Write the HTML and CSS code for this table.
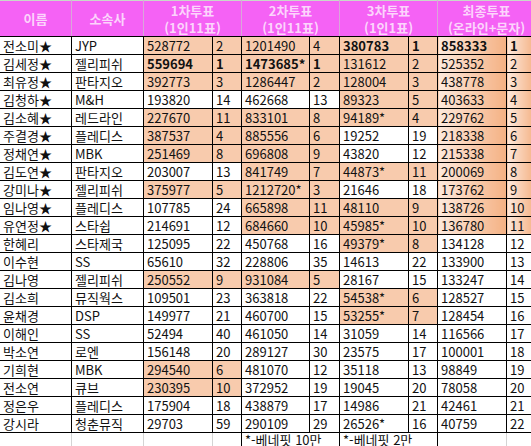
FILE: index.html
```html
<!DOCTYPE html>
<html lang="ko">
<head>
<meta charset="utf-8">
<link rel="stylesheet" href="styles.css">
</head>
<body>
<table class="sheet">
  <colgroup>
    <col class="c-name"><col class="c-agency">
    <col class="c-vote"><col class="c-rank">
    <col class="c-vote2"><col class="c-rank2">
    <col class="c-vote"><col class="c-rank">
    <col class="c-vote"><col class="c-rank">
  </colgroup>
  <thead>
    <tr>
      <th>이름</th>
      <th>소속사</th>
      <th colspan="2"><span class="hl">1차투표</span><span class="hl">(1인11표)</span></th>
      <th colspan="2"><span class="hl">2차투표</span><span class="hl">(1인11표)</span></th>
      <th colspan="2"><span class="hl">3차투표</span><span class="hl">(1인1표)</span></th>
      <th colspan="2"><span class="hl">최종투표</span><span class="hl">(온라인+문자)</span></th>
    </tr>
  </thead>
  <tbody>
    <tr><td>전소미★</td><td>JYP</td><td class="o">528772</td><td class="o">2</td><td class="o">1201490</td><td class="o">4</td><td class="o b">380783</td><td class="o b">1</td><td class="g b">858333</td><td class="g b">1</td></tr>
    <tr><td>김세정★</td><td>젤리피쉬</td><td class="o b">559694</td><td class="o b">1</td><td class="o b">1473685*</td><td class="o b">1</td><td class="o">131612</td><td class="o">2</td><td class="g">525352</td><td class="g">2</td></tr>
    <tr><td>최유정★</td><td>판타지오</td><td class="o">392773</td><td class="o">3</td><td class="o">1286447</td><td class="o">2</td><td class="o">128004</td><td class="o">3</td><td class="g">438778</td><td class="g">3</td></tr>
    <tr><td>김청하★</td><td>M&amp;H</td><td>193820</td><td>14</td><td>462668</td><td>13</td><td class="o">89323</td><td class="o">5</td><td class="g">403633</td><td class="g">4</td></tr>
    <tr><td>김소혜★</td><td>레드라인</td><td class="o">227670</td><td class="o">11</td><td class="o">833101</td><td class="o">8</td><td class="o">94189*</td><td class="o">4</td><td class="g">229762</td><td class="g">5</td></tr>
    <tr><td>주결경★</td><td>플레디스</td><td class="o">387537</td><td class="o">4</td><td class="o">885556</td><td class="o">6</td><td>19252</td><td>19</td><td class="g">218338</td><td class="g">6</td></tr>
    <tr><td>정채연★</td><td>MBK</td><td class="o">251469</td><td class="o">8</td><td class="o">696808</td><td class="o">9</td><td>43820</td><td>12</td><td class="g">215338</td><td class="g">7</td></tr>
    <tr><td>김도연★</td><td>판타지오</td><td>203007</td><td>13</td><td class="o">841749</td><td class="o">7</td><td class="o">44873*</td><td class="o">11</td><td class="g">200069</td><td class="g">8</td></tr>
    <tr><td>강미나★</td><td>젤리피쉬</td><td class="o">375977</td><td class="o">5</td><td class="o">1212720*</td><td class="o">3</td><td>21646</td><td>18</td><td class="g">173762</td><td class="g">9</td></tr>
    <tr><td>임나영★</td><td>플레디스</td><td>107785</td><td>24</td><td class="o">665898</td><td class="o">11</td><td class="o">48110</td><td class="o">9</td><td class="g">138726</td><td class="g">10</td></tr>
    <tr><td>유연정★</td><td>스타쉽</td><td>214691</td><td>12</td><td class="o">684660</td><td class="o">10</td><td class="o">45985*</td><td class="o">10</td><td class="g">136780</td><td class="g">11</td></tr>
    <tr><td>한혜리</td><td>스타제국</td><td>125095</td><td>22</td><td>450768</td><td>16</td><td class="o">49379*</td><td class="o">8</td><td>134128</td><td>12</td></tr>
    <tr><td>이수현</td><td>SS</td><td>65610</td><td>32</td><td>228806</td><td>35</td><td>14613</td><td>22</td><td>133900</td><td>13</td></tr>
    <tr><td>김나영</td><td>젤리피쉬</td><td class="o">250552</td><td class="o">9</td><td class="o">931084</td><td class="o">5</td><td>28167</td><td>15</td><td>133247</td><td>14</td></tr>
    <tr><td>김소희</td><td>뮤직웍스</td><td>109501</td><td>23</td><td>363818</td><td>22</td><td class="o">54538*</td><td class="o">6</td><td>128527</td><td>15</td></tr>
    <tr><td>윤채경</td><td>DSP</td><td>149977</td><td>21</td><td>460700</td><td>15</td><td class="o">53255*</td><td class="o">7</td><td>128454</td><td>16</td></tr>
    <tr><td>이해인</td><td>SS</td><td>52494</td><td>40</td><td>461050</td><td>14</td><td>31059</td><td>14</td><td>116566</td><td>17</td></tr>
    <tr><td>박소연</td><td>로엔</td><td>156148</td><td>20</td><td>289127</td><td>30</td><td>23575</td><td>17</td><td>100001</td><td>18</td></tr>
    <tr><td>기희현</td><td>MBK</td><td class="o">294540</td><td class="o">6</td><td>481070</td><td>12</td><td>35118</td><td>13</td><td>98849</td><td>19</td></tr>
    <tr><td>전소연</td><td>큐브</td><td class="o">230395</td><td class="o">10</td><td>372952</td><td>19</td><td>19045</td><td>20</td><td>78058</td><td>20</td></tr>
    <tr><td>정은우</td><td>플레디스</td><td>175904</td><td>18</td><td>438879</td><td>17</td><td>14986</td><td>21</td><td>42461</td><td>21</td></tr>
    <tr><td>강시라</td><td>청춘뮤직</td><td>29703</td><td>59</td><td>290109</td><td>29</td><td>26526*</td><td>16</td><td>40759</td><td>22</td></tr>
    <tr class="foot">
      <td></td><td></td><td></td><td></td>
      <td colspan="2" class="note">*-베네핏 10만</td>
      <td colspan="2" class="note">*-베네핏 2만</td>
      <td class="note"></td><td></td>
    </tr>
  </tbody>
</table>
</body>
</html>
```

FILE: styles.css
```css
html, body {
  margin: 0;
  padding: 0;
  background: #ffffff;
  overflow: hidden;
}

.sheet {
  border-collapse: collapse;
  table-layout: fixed;
  width: 536px;
  margin-left: -1px;
  font-family: "Noto Sans CJK KR", "Noto Sans", sans-serif;
  font-size: 13px;
  color: #111;
}

.c-name { width: 72px; }
.c-agency { width: 72px; }
.c-vote { width: 69px; }
.c-rank { width: 29px; }
.c-vote2 { width: 68px; }
.c-rank2 { width: 30px; }

.sheet thead tr {
  height: 36px;
}

.sheet tbody tr {
  height: 18px;
}

.sheet th {
  padding: 0;
  background: #f562f5;
  color: #fcd4fc;
  font-weight: bold;
  font-size: 13px;
  line-height: 16px;
  text-align: center;
  vertical-align: middle;
  border: 1px solid #d9a6d9;
  border-top: 1px solid #c8d8c8;
  border-bottom: 1px solid #000;
}

.hl {
  display: block;
  height: 17px;
  line-height: 17px;
  overflow: hidden;
}

.sheet td {
  padding: 0 0 0 3px;
  line-height: 16px;
  border: 1px solid #000;
  white-space: nowrap;
  overflow: hidden;
  vertical-align: middle;
}

.sheet td.o {
  background: #f8cbad;
}

.sheet td.g {
  background: linear-gradient(to right, #fde9dc, #f4b183);
}

.sheet td.b {
  font-weight: bold;
}

.sheet tr.foot td {
  border: none;
  border-left: 1px solid #d4d4d4;
  vertical-align: top;
  line-height: 13px;
  padding-top: 0;
}

.sheet tr.foot td.note {
  border-left: 1px solid #000;
}
```
